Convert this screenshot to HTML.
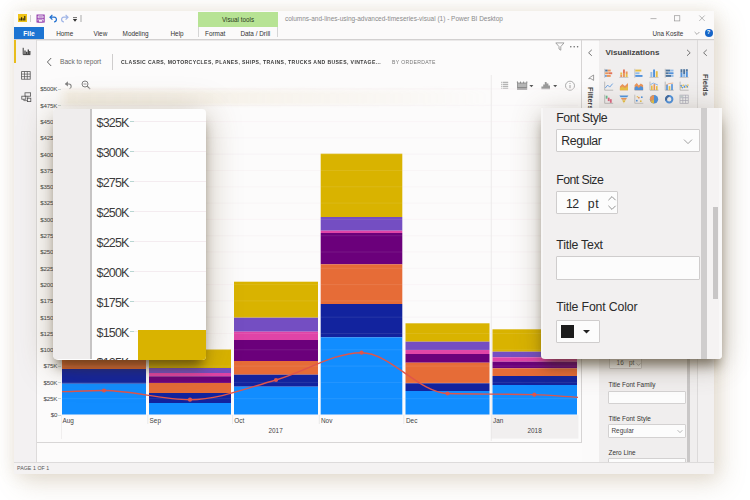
<!DOCTYPE html>
<html><head><meta charset="utf-8">
<style>
*{box-sizing:border-box;margin:0;padding:0}
html,body{width:750px;height:500px;overflow:hidden;background:#fff;font-family:"Liberation Sans",sans-serif;}
.abs{position:absolute}
#win{position:absolute;left:14px;top:11px;width:700px;height:463px;background:#f3f1f1;box-shadow:7px 9px 24px rgba(150,125,80,.22),0 0 16px rgba(160,135,90,.16);}
#page{position:absolute;left:0;top:0;width:750px;height:500px;overflow:hidden}
.t{position:absolute;white-space:nowrap;line-height:1;}
.tab{font-size:6.4px;color:#333;top:31.1px}
.yl{position:absolute;left:27.2px;width:30px;text-align:right;font-size:6.2px;letter-spacing:-.2px;color:#444;line-height:8px;white-space:nowrap}
.zl{position:absolute;left:96.6px;font-size:12.5px;letter-spacing:-0.85px;color:#3c3c3c;line-height:14px;white-space:nowrap}
.lab{font-size:6.4px;color:#333}
.zlab{font-size:12.3px;color:#2a2a2a;letter-spacing:-0.45px}
.box{position:absolute;background:#fcfcfc;border:0.7px solid #d3d1d1;border-radius:1px}
</style></head><body><div id="page">

<div id="win"></div>

<!-- title bar -->
<div class="abs" style="left:14px;top:11px;width:700px;height:28px;background:#fbfafa"></div>
<!-- logo -->
<div class="abs" style="left:18.3px;top:13.8px;width:8.7px;height:8.3px;background:#f0c419"></div>
<svg class="abs" style="left:18.3px;top:14.2px" width="9" height="8" viewBox="0 0 9 8"><path d="M2 6.5V4.5M3.6 6.5V3.2M5.2 6.5V4.2M6.8 6.5V2" stroke="#2a2410" stroke-width="1.1" fill="none"/></svg>
<div class="abs" style="left:30.3px;top:14.8px;width:1.2px;height:7px;background:#cdcdcd"></div>
<!-- save -->
<svg class="abs" style="left:36px;top:14px" width="9" height="9" viewBox="0 0 9 9"><rect x="1.1" y="1.1" width="7" height="6.9" fill="#fff" stroke="#8a2da5" stroke-width="1.1"/><rect x="2.4" y="1.2" width="4.4" height="2.6" fill="#c9a3d6"/><path d="M1.2 4.4H8" stroke="#8a2da5" stroke-width=".8"/><rect x="2.6" y="5.8" width="4" height="2.2" fill="#fff" stroke="#8a2da5" stroke-width=".6"/></svg>
<!-- undo -->
<svg class="abs" style="left:48.5px;top:13.6px" width="9" height="9" viewBox="0 0 9 9"><path d="M3.4 0.8L1 3.2L3.4 5.6M1.2 3.2H5.2C8.2 3.2 8.2 8 5 8" fill="none" stroke="#1f6fd0" stroke-width="1.2"/></svg>
<!-- redo -->
<svg class="abs" style="left:59.8px;top:13.6px" width="9" height="9" viewBox="0 0 9 9"><path d="M5.6 0.8L8 3.2L5.6 5.6M7.8 3.2H3.8C0.8 3.2 0.8 8 4 8" fill="none" stroke="#9fb4e6" stroke-width="1.2"/></svg>
<svg class="abs" style="left:71.5px;top:16.6px" width="6" height="6" viewBox="0 0 6 6"><path d="M1 0.6H5" stroke="#333" stroke-width=".7"/><path d="M0.8 2L3 4.8L5.2 2Z" fill="#333"/></svg>
<div class="abs" style="left:80.4px;top:14.8px;width:1.2px;height:7px;background:#d2d2d2"></div>

<!-- File tab -->
<div class="abs" style="left:14px;top:27px;width:30px;height:12px;background:#1c74d2"></div>
<div class="t" style="left:14px;width:30px;text-align:center;top:30.9px;font-size:6.6px;color:#fff;font-weight:bold">File</div>
<div class="t tab" style="left:49.7px;width:30px;text-align:center">Home</div>
<div class="t tab" style="left:85.4px;width:30px;text-align:center">View</div>
<div class="t tab" style="left:122.6px;">Modeling</div>
<div class="t tab" style="left:170.5px;">Help</div>
<!-- visual tools -->
<div class="abs" style="left:197.8px;top:12.3px;width:80.4px;height:14.6px;background:#b7e394"></div>
<div class="t" style="left:197.8px;width:80.4px;text-align:center;top:17.3px;font-size:6.3px;color:#2c3a22">Visual tools</div>
<div class="abs" style="left:197.8px;top:26.9px;width:80.4px;height:10px;border-left:0.7px solid #d5d5d5;border-right:0.7px solid #d5d5d5;"></div>
<div class="t tab" style="left:205px;">Format</div>
<div class="t tab" style="left:240.4px;">Data / Drill</div>
<div class="t" style="left:285px;top:16px;font-size:6.48px;color:#8a8a8a">columns-and-lines-using-advanced-timeseries-visual (1) - Power BI Desktop</div>
<!-- window buttons -->
<svg class="abs" style="left:648px;top:13px" width="60" height="12" viewBox="0 0 60 12"><path d="M2.5 5.6H8.5" stroke="#999" stroke-width=".7"/><rect x="26.6" y="2.7" width="5.2" height="5.2" fill="none" stroke="#999" stroke-width=".7"/><path d="M51.3 2.5L56.7 7.9M56.7 2.5L51.3 7.9" stroke="#999" stroke-width=".7"/></svg>
<div class="t" style="left:652.5px;top:30.6px;font-size:6.3px;color:#333">Una Kosite</div>
<svg class="abs" style="left:693.5px;top:30.5px" width="6" height="5" viewBox="0 0 6 5"><path d="M0.6 1L3 3.4L5.4 1" fill="none" stroke="#888" stroke-width=".7"/></svg>
<div class="abs" style="left:704.6px;top:28.8px;width:8px;height:8px;border-radius:50%;background:#1565c8"></div>
<div class="t" style="left:704.6px;width:8px;text-align:center;top:30.2px;font-size:5.8px;color:#fff;font-weight:bold">?</div>
<!-- ribbon bottom line -->
<div class="abs" style="left:14px;top:38.8px;width:700px;height:1px;background:#d2d0d0"></div>
<div class="abs" style="left:14px;top:39.6px;width:700px;height:1.2px;background:linear-gradient(#e3e1e1,#f3f1f1)"></div>

<!-- left sidebar -->
<div class="abs" style="left:14px;top:39.8px;width:22.6px;height:422px;background:#f3f1f2;border-right:1px solid #dddbdb"></div>
<div class="abs" style="left:14px;top:39.8px;width:2.2px;height:23px;background:#e8bd1c"></div>
<svg class="abs" style="left:21.6px;top:47.4px" width="9" height="9" viewBox="0 0 9 9"><path d="M1.2 0.8V7.6H8.4" fill="none" stroke="#3a3a3a" stroke-width="1"/><path d="M3 7V3.6M4.7 7V4.8M6.3 7V2.6M7.8 7V4" stroke="#3a3a3a" stroke-width="1.25"/></svg>
<svg class="abs" style="left:20.8px;top:70.8px" width="10" height="9" viewBox="0 0 10 9" preserveAspectRatio="none"><rect x=".6" y=".6" width="8.6" height="7.6" fill="none" stroke="#555" stroke-width=".8"/><path d="M.6 3.1H9.2M.6 5.6H9.2M3.5 .6V8.2M6.3 .6V8.2" stroke="#555" stroke-width=".7"/></svg>
<svg class="abs" style="left:20.6px;top:92px" width="11" height="11" viewBox="0 0 11 11"><rect x="4" y=".8" width="5.6" height="3.4" fill="none" stroke="#555" stroke-width=".8"/><rect x=".8" y="4.2" width="4" height="3" fill="none" stroke="#555" stroke-width=".8"/><rect x="6.4" y="6.2" width="3.4" height="3.4" fill="none" stroke="#555" stroke-width=".8"/><path d="M2.8 7.2V8.6H6.4M6.8 4.2V6.2" fill="none" stroke="#555" stroke-width=".7"/></svg>

<!-- canvas -->
<div class="abs" style="left:36.6px;top:40.8px;width:545.4px;height:421px;background:#fcfbfb"></div>
<div class="abs" style="left:36.6px;top:441.6px;width:545.4px;height:0.9px;background:#d8d6d6"></div>
<div class="abs" style="left:581px;top:40px;width:1px;height:402.4px;background:#d6d4d4"></div>
<!-- header -->
<svg class="abs" style="left:45.6px;top:57.2px" width="7" height="10" viewBox="0 0 7 10"><path d="M5.2 1L1.4 5L5.2 9" fill="none" stroke="#555" stroke-width=".9"/></svg>
<div class="t" style="left:60px;top:59.2px;font-size:6.62px;color:#666">Back to report</div>
<div class="abs" style="left:112px;top:53.5px;width:0.8px;height:16px;background:#cfcdcd"></div>
<div class="t" style="left:121px;top:59.6px;font-size:5.1px;font-weight:bold;color:#3a3a3a;letter-spacing:.405px;transform:scaleY(1.22);transform-origin:50% 50%">CLASSIC CARS, MOTORCYCLES, PLANES, SHIPS, TRAINS, TRUCKS AND BUSES, VINTAGE...</div>
<div class="t" style="left:392px;top:59.6px;font-size:5.1px;color:#777;letter-spacing:.34px;transform:scaleY(1.22);transform-origin:50% 50%">BY ORDERDATE</div>
<svg class="abs" style="left:554.6px;top:42.2px" width="10" height="9" viewBox="0 0 10 9"><path d="M0.8 0.9H9L5.8 4.6V8.2L4 7V4.6Z" fill="none" stroke="#8f8f8f" stroke-width=".8"/></svg>
<svg class="abs" style="left:568px;top:44px" width="12" height="5" viewBox="0 0 12 5"><circle cx="2.8" cy="2.7" r=".8" fill="#6a6a6a"/><circle cx="6.2" cy="2.7" r=".8" fill="#6a6a6a"/><circle cx="9.6" cy="2.7" r=".8" fill="#6a6a6a"/></svg>
<!-- visual toolbar -->
<svg class="abs" style="left:64.4px;top:79.8px" width="9" height="10" viewBox="0 0 9 10"><path d="M1.6 4H5C7.8 4 7.8 8.4 5.4 8.8" fill="none" stroke="#808080" stroke-width="1.05"/><path d="M3.9 1.2L0.8 4L3.9 6.6Z" fill="#808080"/></svg>
<svg class="abs" style="left:81px;top:79.8px" width="10" height="10" viewBox="0 0 10 10"><circle cx="4" cy="4" r="3" fill="none" stroke="#808080" stroke-width="1"/><path d="M6.2 6.2L9.2 9.2" stroke="#808080" stroke-width="1.2"/><path d="M2.5 4H5.5" stroke="#808080" stroke-width=".8"/></svg>
<svg class="abs" style="left:500px;top:79.5px" width="80" height="11" viewBox="0 0 80 11"><g stroke="#8a8a8a" stroke-width=".8" fill="none"><path d="M2.6 2.3H8.2M2.6 4.3H8.2M2.6 6.3H8.2M2.6 8.3H8.2"/><path d="M1 2.3H1.8M1 4.3H1.8M1 6.3H1.8M1 8.3H1.8"/><rect x="17.4" y="3" width="9.4" height="6.4" fill="#b5b5b5"/><rect x="17.4" y="7" width="9.4" height="2.4" fill="#8a8a8a" stroke="none"/><path d="M17.4 1.4V3M20.5 1.6V3.4M23.6 1.6V3.4M26.8 1.4V3" stroke-width="1"/><path d="M41.4 9.2V6.4H43.2V4.6H44.8V2H46.6V3.6H48.4V5.4H50V9.2Z" fill="#9a9a9a" stroke="none"/><circle cx="70" cy="5.7" r="4.5" stroke="#999"/><path d="M70 5V8.2M70 3V3.9" stroke-width=".8"/></g><path d="M29.4 5H33.4L31.4 7.2Z" fill="#555"/><path d="M53.2 5H57.2L55.2 7.2Z" fill="#555"/></svg>

<!-- chart -->
<svg class="abs" style="left:0;top:0" width="750" height="500" viewBox="0 0 750 500">
<rect x="491" y="415" width="87.4" height="23.6" fill="#f1efef"/>
<line x1="60" x2="578" y1="415.0" y2="415.0" stroke="#f7f0f3" stroke-width="0.6"/><line x1="60" x2="578" y1="398.7" y2="398.7" stroke="#f7f0f3" stroke-width="0.6"/><line x1="60" x2="578" y1="382.4" y2="382.4" stroke="#f7f0f3" stroke-width="0.6"/><line x1="60" x2="578" y1="366.1" y2="366.1" stroke="#f7f0f3" stroke-width="0.6"/><line x1="60" x2="578" y1="349.8" y2="349.8" stroke="#f7f0f3" stroke-width="0.6"/><line x1="60" x2="578" y1="333.5" y2="333.5" stroke="#f7f0f3" stroke-width="0.6"/><line x1="60" x2="578" y1="317.2" y2="317.2" stroke="#f7f0f3" stroke-width="0.6"/><line x1="60" x2="578" y1="300.9" y2="300.9" stroke="#f7f0f3" stroke-width="0.6"/><line x1="60" x2="578" y1="284.6" y2="284.6" stroke="#f7f0f3" stroke-width="0.6"/><line x1="60" x2="578" y1="268.3" y2="268.3" stroke="#f7f0f3" stroke-width="0.6"/><line x1="60" x2="578" y1="252.0" y2="252.0" stroke="#f7f0f3" stroke-width="0.6"/><line x1="60" x2="578" y1="235.7" y2="235.7" stroke="#f7f0f3" stroke-width="0.6"/><line x1="60" x2="578" y1="219.4" y2="219.4" stroke="#f7f0f3" stroke-width="0.6"/><line x1="60" x2="578" y1="203.1" y2="203.1" stroke="#f7f0f3" stroke-width="0.6"/><line x1="60" x2="578" y1="186.8" y2="186.8" stroke="#f7f0f3" stroke-width="0.6"/><line x1="60" x2="578" y1="170.5" y2="170.5" stroke="#f7f0f3" stroke-width="0.6"/><line x1="60" x2="578" y1="154.2" y2="154.2" stroke="#f7f0f3" stroke-width="0.6"/><line x1="60" x2="578" y1="137.9" y2="137.9" stroke="#f7f0f3" stroke-width="0.6"/><line x1="60" x2="578" y1="121.6" y2="121.6" stroke="#f7f0f3" stroke-width="0.6"/><line x1="60" x2="578" y1="105.3" y2="105.3" stroke="#f7f0f3" stroke-width="0.6"/><line x1="60" x2="578" y1="89.0" y2="89.0" stroke="#f7f0f3" stroke-width="0.6"/>
<line x1="491.3" x2="491.3" y1="75" y2="441" stroke="#e6e4e4" stroke-width=".7"/>
<line x1="61.5" x2="61.5" y1="415" y2="439" stroke="#e8e6e6" stroke-width=".6"/>
<line x1="147.8" x2="147.8" y1="415" y2="424" stroke="#dddddd" stroke-width=".6"/>
<line x1="232.6" x2="232.6" y1="415" y2="424" stroke="#dddddd" stroke-width=".6"/>
<line x1="319.3" x2="319.3" y1="415" y2="424" stroke="#dddddd" stroke-width=".6"/>
<line x1="403.8" x2="403.8" y1="415" y2="424" stroke="#dddddd" stroke-width=".6"/>
<rect x="62" y="345" width="84.0" height="7.0" fill="#D9B300"/>
<rect x="62" y="352" width="84.0" height="2.0" fill="#744EC2"/>
<rect x="62" y="354" width="84.0" height="1.0" fill="#E044A7"/>
<rect x="62" y="355" width="84.0" height="3.0" fill="#6B007B"/>
<rect x="62" y="358" width="84.0" height="11.0" fill="#E66C37"/>
<rect x="62" y="369" width="84.0" height="14.7" fill="#12239E"/>
<rect x="62" y="383.7" width="84.0" height="30.8" fill="#118DFF"/>
<rect x="149" y="349.5" width="82.0" height="18.5" fill="#D9B300"/>
<rect x="149" y="368" width="82.0" height="5.0" fill="#744EC2"/>
<rect x="149" y="373" width="82.0" height="3.3" fill="#E044A7"/>
<rect x="149" y="376.3" width="82.0" height="6.7" fill="#6B007B"/>
<rect x="149" y="383" width="82.0" height="10.0" fill="#E66C37"/>
<rect x="149" y="393" width="82.0" height="10.0" fill="#12239E"/>
<rect x="149" y="403" width="82.0" height="11.5" fill="#118DFF"/>
<rect x="234" y="281.7" width="84.0" height="36.0" fill="#D9B300"/>
<rect x="234" y="317.7" width="84.0" height="14.0" fill="#744EC2"/>
<rect x="234" y="331.7" width="84.0" height="8.3" fill="#E044A7"/>
<rect x="234" y="340" width="84.0" height="21.0" fill="#6B007B"/>
<rect x="234" y="361" width="84.0" height="13.7" fill="#E66C37"/>
<rect x="234" y="374.7" width="84.0" height="12.0" fill="#12239E"/>
<rect x="234" y="386.7" width="84.0" height="27.8" fill="#118DFF"/>
<rect x="320.7" y="153.7" width="81.6" height="63.3" fill="#D9B300"/>
<rect x="320.7" y="217" width="81.6" height="13.7" fill="#744EC2"/>
<rect x="320.7" y="230.7" width="81.6" height="2.3" fill="#E044A7"/>
<rect x="320.7" y="233" width="81.6" height="31.3" fill="#6B007B"/>
<rect x="320.7" y="264.3" width="81.6" height="39.7" fill="#E66C37"/>
<rect x="320.7" y="304" width="81.6" height="33.3" fill="#12239E"/>
<rect x="320.7" y="337.3" width="81.6" height="77.2" fill="#118DFF"/>
<rect x="405.5" y="323.3" width="84.0" height="18.4" fill="#D9B300"/>
<rect x="405.5" y="341.7" width="84.0" height="8.3" fill="#744EC2"/>
<rect x="405.5" y="350" width="84.0" height="4.0" fill="#E044A7"/>
<rect x="405.5" y="354" width="84.0" height="8.7" fill="#6B007B"/>
<rect x="405.5" y="362.7" width="84.0" height="20.6" fill="#E66C37"/>
<rect x="405.5" y="383.3" width="84.0" height="7.7" fill="#12239E"/>
<rect x="405.5" y="391" width="84.0" height="23.5" fill="#118DFF"/>
<rect x="492.5" y="329.3" width="84.5" height="22.4" fill="#D9B300"/>
<rect x="492.5" y="351.7" width="84.5" height="5.6" fill="#744EC2"/>
<rect x="492.5" y="357.3" width="84.5" height="4.4" fill="#E044A7"/>
<rect x="492.5" y="361.7" width="84.5" height="6.6" fill="#6B007B"/>
<rect x="492.5" y="368.3" width="84.5" height="7.7" fill="#E66C37"/>
<rect x="492.5" y="376" width="84.5" height="9.0" fill="#12239E"/>
<rect x="492.5" y="385" width="84.5" height="29.5" fill="#118DFF"/>
<line x1="62" x2="577" y1="398.7" y2="398.7" stroke="#ffffff" stroke-opacity=".13" stroke-width="0.7"/><line x1="62" x2="577" y1="382.4" y2="382.4" stroke="#ffffff" stroke-opacity=".13" stroke-width="0.7"/><line x1="62" x2="577" y1="366.1" y2="366.1" stroke="#ffffff" stroke-opacity=".13" stroke-width="0.7"/><line x1="62" x2="577" y1="349.8" y2="349.8" stroke="#ffffff" stroke-opacity=".13" stroke-width="0.7"/><line x1="62" x2="577" y1="333.5" y2="333.5" stroke="#ffffff" stroke-opacity=".13" stroke-width="0.7"/><line x1="62" x2="577" y1="317.2" y2="317.2" stroke="#ffffff" stroke-opacity=".13" stroke-width="0.7"/><line x1="62" x2="577" y1="300.9" y2="300.9" stroke="#ffffff" stroke-opacity=".13" stroke-width="0.7"/><line x1="62" x2="577" y1="284.6" y2="284.6" stroke="#ffffff" stroke-opacity=".13" stroke-width="0.7"/><line x1="62" x2="577" y1="268.3" y2="268.3" stroke="#ffffff" stroke-opacity=".13" stroke-width="0.7"/><line x1="62" x2="577" y1="252.0" y2="252.0" stroke="#ffffff" stroke-opacity=".13" stroke-width="0.7"/><line x1="62" x2="577" y1="235.7" y2="235.7" stroke="#ffffff" stroke-opacity=".13" stroke-width="0.7"/><line x1="62" x2="577" y1="219.4" y2="219.4" stroke="#ffffff" stroke-opacity=".13" stroke-width="0.7"/><line x1="62" x2="577" y1="203.1" y2="203.1" stroke="#ffffff" stroke-opacity=".13" stroke-width="0.7"/><line x1="62" x2="577" y1="186.8" y2="186.8" stroke="#ffffff" stroke-opacity=".13" stroke-width="0.7"/><line x1="62" x2="577" y1="170.5" y2="170.5" stroke="#ffffff" stroke-opacity=".13" stroke-width="0.7"/><line x1="62" x2="577" y1="154.2" y2="154.2" stroke="#ffffff" stroke-opacity=".13" stroke-width="0.7"/><line x1="62" x2="577" y1="137.9" y2="137.9" stroke="#ffffff" stroke-opacity=".13" stroke-width="0.7"/><line x1="62" x2="577" y1="121.6" y2="121.6" stroke="#ffffff" stroke-opacity=".13" stroke-width="0.7"/><line x1="62" x2="577" y1="105.3" y2="105.3" stroke="#ffffff" stroke-opacity=".13" stroke-width="0.7"/><line x1="62" x2="577" y1="89.0" y2="89.0" stroke="#ffffff" stroke-opacity=".13" stroke-width="0.7"/>
<path d="M62,391.7 C76.0,391.30 90.0,390.50 104,390.5 C132.7,390.50 161.3,399.70 190,399.7 C218.7,399.70 247.3,387.86 276,380 C304.5,372.18 333.0,352.70 361.5,352.7 C390.2,352.70 418.8,392.71 447.5,393.5 C476.4,394.30 505.4,393.90 534.3,394.7 C548.9,395.10 563.4,396.43 578,397.3" fill="none" stroke="#df554b" stroke-width="1.35"/>
<circle cx="104" cy="390.5" r="2.1" fill="#df554b"/><circle cx="190" cy="399.7" r="2.1" fill="#df554b"/><circle cx="276" cy="380" r="2.1" fill="#df554b"/><circle cx="361.5" cy="352.7" r="2.1" fill="#df554b"/><circle cx="447.5" cy="393.5" r="2.1" fill="#df554b"/><circle cx="534.3" cy="394.7" r="2.1" fill="#df554b"/>
</svg>
<div class="yl" style="top:411.3px">$0</div><div class="abs" style="left:58.4px;top:414.7px;width:2.4px;height:0.6px;background:#c9d6d4"></div><div class="yl" style="top:395.0px">$25K</div><div class="abs" style="left:58.4px;top:398.4px;width:2.4px;height:0.6px;background:#c9d6d4"></div><div class="yl" style="top:378.7px">$50K</div><div class="abs" style="left:58.4px;top:382.1px;width:2.4px;height:0.6px;background:#c9d6d4"></div><div class="yl" style="top:362.4px">$75K</div><div class="abs" style="left:58.4px;top:365.8px;width:2.4px;height:0.6px;background:#c9d6d4"></div><div class="yl" style="top:346.1px">$100K</div><div class="abs" style="left:58.4px;top:349.5px;width:2.4px;height:0.6px;background:#c9d6d4"></div><div class="yl" style="top:329.8px">$125K</div><div class="abs" style="left:58.4px;top:333.2px;width:2.4px;height:0.6px;background:#c9d6d4"></div><div class="yl" style="top:313.5px">$150K</div><div class="abs" style="left:58.4px;top:316.9px;width:2.4px;height:0.6px;background:#c9d6d4"></div><div class="yl" style="top:297.2px">$175K</div><div class="abs" style="left:58.4px;top:300.6px;width:2.4px;height:0.6px;background:#c9d6d4"></div><div class="yl" style="top:280.9px">$200K</div><div class="abs" style="left:58.4px;top:284.3px;width:2.4px;height:0.6px;background:#c9d6d4"></div><div class="yl" style="top:264.6px">$225K</div><div class="abs" style="left:58.4px;top:268.0px;width:2.4px;height:0.6px;background:#c9d6d4"></div><div class="yl" style="top:248.3px">$250K</div><div class="abs" style="left:58.4px;top:251.7px;width:2.4px;height:0.6px;background:#c9d6d4"></div><div class="yl" style="top:232.0px">$275K</div><div class="abs" style="left:58.4px;top:235.4px;width:2.4px;height:0.6px;background:#c9d6d4"></div><div class="yl" style="top:215.7px">$300K</div><div class="abs" style="left:58.4px;top:219.1px;width:2.4px;height:0.6px;background:#c9d6d4"></div><div class="yl" style="top:199.4px">$325K</div><div class="abs" style="left:58.4px;top:202.8px;width:2.4px;height:0.6px;background:#c9d6d4"></div><div class="yl" style="top:183.1px">$350K</div><div class="abs" style="left:58.4px;top:186.5px;width:2.4px;height:0.6px;background:#c9d6d4"></div><div class="yl" style="top:166.8px">$375K</div><div class="abs" style="left:58.4px;top:170.2px;width:2.4px;height:0.6px;background:#c9d6d4"></div><div class="yl" style="top:150.5px">$400K</div><div class="abs" style="left:58.4px;top:153.9px;width:2.4px;height:0.6px;background:#c9d6d4"></div><div class="yl" style="top:134.2px">$425K</div><div class="abs" style="left:58.4px;top:137.6px;width:2.4px;height:0.6px;background:#c9d6d4"></div><div class="yl" style="top:117.9px">$450K</div><div class="abs" style="left:58.4px;top:121.3px;width:2.4px;height:0.6px;background:#c9d6d4"></div><div class="yl" style="top:101.6px">$475K</div><div class="abs" style="left:58.4px;top:105.0px;width:2.4px;height:0.6px;background:#c9d6d4"></div><div class="yl" style="top:85.3px">$500K</div><div class="abs" style="left:58.4px;top:88.7px;width:2.4px;height:0.6px;background:#c9d6d4"></div>
<div class="t lab" style="left:62.5px;top:418px;color:#444">Aug</div>
<div class="t lab" style="left:149.6px;top:418px;color:#444">Sep</div>
<div class="t lab" style="left:234.3px;top:418px;color:#444">Oct</div>
<div class="t lab" style="left:321px;top:418px;color:#444">Nov</div>
<div class="t lab" style="left:406px;top:418px;color:#444">Dec</div>
<div class="t lab" style="left:493px;top:418px;color:#444">Jan</div>
<div class="t lab" style="left:268.5px;top:427.6px;color:#444">2017</div>
<div class="t lab" style="left:527.5px;top:427.6px;color:#444">2018</div>

<!-- right panes -->
<div class="abs" style="left:582px;top:40.8px;width:17px;height:421px;background:#fbfafa"></div>
<div class="abs" style="left:598.6px;top:40px;width:0.9px;height:422px;background:#e2e0e0"></div>
<div class="abs" style="left:599.4px;top:40.8px;width:97.6px;height:421px;background:#f0eeee"></div>
<div class="abs" style="left:697px;top:40px;width:0.8px;height:422px;background:#dcdada"></div>
<div class="abs" style="left:697.8px;top:40.8px;width:16.2px;height:421px;background:#f2f0f0"></div>
<svg class="abs" style="left:586.5px;top:48.2px" width="7" height="10" viewBox="0 0 7 10"><path d="M4.8 1.8L1.6 4.8L4.8 7.8" fill="none" stroke="#555" stroke-width=".8"/></svg>
<svg class="abs" style="left:702.2px;top:48.2px" width="7" height="10" viewBox="0 0 7 10"><path d="M4.8 1.8L1.6 4.8L4.8 7.8" fill="none" stroke="#555" stroke-width=".8"/></svg>
<svg class="abs" style="left:684.6px;top:48.2px" width="7" height="10" viewBox="0 0 7 10"><path d="M2 1.8L5.2 4.8L2 7.8" fill="none" stroke="#555" stroke-width=".8"/></svg>
<div class="t" style="left:605.6px;top:48.8px;font-size:8.1px;font-weight:bold;color:#444">Visualizations</div>
<svg class="abs" style="left:587px;top:73.5px" width="8" height="8" viewBox="0 0 8 8"><path d="M6.6 1V6.4L3.8 4.6H1.6L3.8 2.8Z" fill="none" stroke="#777" stroke-width=".7"/></svg>
<div class="t" style="left:583.4px;top:86.6px;font-size:7.6px;font-weight:bold;color:#444;transform-origin:0 0;transform:translate(11px,0) rotate(90deg)">Filters</div>
<div class="t" style="left:698.2px;top:74px;font-size:7.6px;font-weight:bold;color:#444;transform-origin:0 0;transform:translate(11px,0) rotate(90deg)">Fields</div>
<svg class="abs" style="left:0;top:0;opacity:.82" width="750" height="500" viewBox="0 0 750 500"><g transform="translate(604.2,68.8)"><path d="M.5 0V9" stroke="#999" stroke-width=".6"/><rect x="1" y="0.8" width="2.5" height="1.9" fill="#2a5a8c"/><rect x="3.5" y="0.8" width="3" height="1.9" fill="#e8833a"/><rect x="1" y="3.5" width="3.5" height="1.9" fill="#e8833a"/><rect x="4.5" y="3.5" width="3.5" height="1.9" fill="#e05a3a"/><rect x="1" y="6.2" width="1.5" height="1.9" fill="#2f7ed8"/><rect x="2.5" y="6.2" width="4" height="1.9" fill="#e8833a"/></g><g transform="translate(619.4,68.8)"><path d="M0 8.6H9" stroke="#999" stroke-width=".6"/><rect x="0.9" y="5.699999999999999" width="1.9" height="2.5" fill="#e8833a"/><rect x="0.9" y="3.6999999999999993" width="1.9" height="2" fill="#e6b422"/><rect x="3.6" y="4.199999999999999" width="1.9" height="4" fill="#e8833a"/><rect x="3.6" y="0.6999999999999993" width="1.9" height="3.5" fill="#e05a3a"/><rect x="6.300000000000001" y="5.199999999999999" width="1.9" height="3" fill="#e6b422"/><rect x="6.300000000000001" y="2.6999999999999993" width="1.9" height="2.5" fill="#e8833a"/></g><g transform="translate(634.3,68.8)"><path d="M.5 0V9" stroke="#999" stroke-width=".6"/><rect x="1" y="0.8" width="6" height="1.9" fill="#e6b422"/><rect x="1" y="3.5" width="4.2" height="1.9" fill="#7fb2e6"/><rect x="1" y="6.2" width="7.2" height="1.9" fill="#2f7ed8"/></g><g transform="translate(649.5,68.8)"><path d="M0 8.6H9" stroke="#999" stroke-width=".6"/><rect x="0.9" y="3.1999999999999993" width="1.9" height="5" fill="#7fb2e6"/><rect x="3.6" y="0.6999999999999993" width="1.9" height="7.5" fill="#2f7ed8"/><rect x="6.300000000000001" y="2.3999999999999995" width="1.9" height="5.8" fill="#e6b422"/></g><g transform="translate(664.7,68.8)"><path d="M.5 0V9" stroke="#999" stroke-width=".6"/><rect x="1" y="0.8" width="4.5" height="1.9" fill="#2a5a8c"/><rect x="5.5" y="0.8" width="3.3" height="1.9" fill="#7fb2e6"/><rect x="1" y="3.5" width="3" height="1.9" fill="#2a5a8c"/><rect x="4" y="3.5" width="4.8" height="1.9" fill="#2f7ed8"/><rect x="1" y="6.2" width="5.4" height="1.9" fill="#2a5a8c"/><rect x="6.4" y="6.2" width="2.4" height="1.9" fill="#7fb2e6"/></g><g transform="translate(679.6,68.8)"><path d="M0 8.6H9" stroke="#999" stroke-width=".6"/><rect x="0.9" y="3.6999999999999993" width="1.9" height="4.5" fill="#2f7ed8"/><rect x="0.9" y="0.39999999999999947" width="1.9" height="3.3" fill="#2a5a8c"/><rect x="3.6" y="5.199999999999999" width="1.9" height="3" fill="#7fb2e6"/><rect x="3.6" y="0.39999999999999947" width="1.9" height="4.8" fill="#2a5a8c"/><rect x="6.300000000000001" y="2.799999999999999" width="1.9" height="5.4" fill="#2f7ed8"/><rect x="6.300000000000001" y="0.399999999999999" width="1.9" height="2.4" fill="#2a5a8c"/></g><g transform="translate(604.2,81.6)"><path d="M.5 0V8.6H9" stroke="#888" stroke-width=".6" fill="none"/><path d="M1 6.5L3.5 3.5L5.5 5.5L8.5 2" stroke="#2f7ed8" stroke-width=".8" fill="none"/></g><g transform="translate(619.4,81.6)"><path d="M.5 8.6V5L3 2.5L5.5 4.5L8.6 1.5V8.6Z" fill="#e8833a"/><path d="M.5 8.6V6.5L3 5L5.5 6.5L8.6 4.5V8.6Z" fill="#e6b422"/></g><g transform="translate(634.3,81.6)"><path d="M.3 8.6V3.5L2.5 1.5L4.5 4L6.5 2L8.8 3.5V8.6Z" fill="#e8833a"/><path d="M.3 8.6V6L2.5 4.5L4.5 6.5L6.5 4.5L8.8 6V8.6Z" fill="#2f7ed8"/></g><g transform="translate(649.5,81.6)"><path d="M.5 0V8.6H9" stroke="#888" stroke-width=".6" fill="none"/><rect x="1.5" y="4" width="1.6" height="4.5" fill="#e6b422"/><rect x="4" y="2.5" width="1.6" height="6" fill="#e8833a"/><rect x="6.5" y="4.5" width="1.6" height="4" fill="#e6b422"/><path d="M1 3L4 1.5L8.5 3.5" stroke="#2f7ed8" stroke-width=".6" fill="none"/></g><g transform="translate(664.7,81.6)"><path d="M.5 0V8.6H9" stroke="#888" stroke-width=".6" fill="none"/><rect x="1.5" y="3" width="1.6" height="5.5" fill="#2f7ed8"/><rect x="4" y="4.5" width="1.6" height="4" fill="#e6b422"/><rect x="6.5" y="2.5" width="1.6" height="6" fill="#2f7ed8"/><path d="M1 4L4 2L8.5 1.5" stroke="#e8833a" stroke-width=".6" fill="none"/></g><g transform="translate(679.6,81.6)"><path d="M.5 0V8.6H9" stroke="#888" stroke-width=".6" fill="none"/><path d="M1.2 6.5Q3 1 4.8 4.5T8.6 3" stroke="#e6b422" stroke-width="1.3" fill="none" stroke-dasharray="1.4 .8"/><path d="M1.2 3.5Q3 8 4.8 5T8.6 6.5" stroke="#2f7ed8" stroke-width="1.3" fill="none" stroke-dasharray="1.4 .8"/></g><g transform="translate(604.2,94.7)"><path d="M.5 0V8.6H9" stroke="#888" stroke-width=".6" fill="none"/><rect x="1.5" y="1" width="1.8" height="3" fill="#4caf7a"/><rect x="3.6" y="3" width="1.8" height="3.4" fill="#d64a6a"/><rect x="5.7" y="4.5" width="1.8" height="3.6" fill="#d64a6a"/></g><g transform="translate(619.4,94.7)"><path d="M0 .8H9L7.8 2.6H1.2Z" fill="#2f7ed8"/><path d="M1.5 3.2H7.5L6.5 5H2.5Z" fill="#e8833a"/><path d="M2.8 5.6H6.2L5.4 7.2H3.6Z" fill="#e6b422"/><path d="M3.9 7.6H5.1L4.5 8.8Z" fill="#e6b422"/></g><g transform="translate(634.3,94.7)"><path d="M.5 0V8.6H9" stroke="#999" stroke-width=".6" fill="none"/><circle cx="2.5" cy="6" r=".9" fill="#2f7ed8"/><circle cx="4.5" cy="3" r=".9" fill="#e8833a"/><circle cx="6.5" cy="6.5" r=".9" fill="#e6b422"/><circle cx="7.5" cy="2.5" r=".9" fill="#2f7ed8"/><circle cx="3" cy="2" r=".7" fill="#e6b422"/></g><g transform="translate(649.5,94.7)"><circle cx="4.5" cy="4.5" r="4.2" fill="#2f7ed8"/><path d="M4.5 4.5V.3A4.2 4.2 0 0 0 1 6.8Z" fill="#e8833a"/><path d="M4.5 4.5L1 6.8A4.2 4.2 0 0 0 4.5 8.7Z" fill="#e6b422"/></g><g transform="translate(664.7,94.7)"><circle cx="4.5" cy="4.5" r="3.2" fill="none" stroke="#2f7ed8" stroke-width="2"/><path d="M4.5 1.3A3.2 3.2 0 0 0 1.5 5.6" fill="none" stroke="#1f4e8c" stroke-width="2"/></g><g transform="translate(679.6,94.7)"><rect x=".4" y=".4" width="8.2" height="8.2" fill="#eef0f0" stroke="#99a" stroke-width=".7"/><path d="M.4 3H8.6M.4 5.8H8.6M3.2 .4V8.6M6 .4V8.6" stroke="#99a" stroke-width=".7"/><rect x=".4" y=".4" width="2.8" height="2.6" fill="#b9c4c8"/></g></svg>

<!-- format pane below overlay -->
<div class="abs" style="left:686.6px;top:108px;width:3.6px;height:354px;background:#c9c7c7"></div>
<div class="box" style="left:608.5px;top:353px;width:33.5px;height:15.5px"></div>
<div class="t lab" style="left:616.6px;top:359.8px;color:#555">16&nbsp;&nbsp;&nbsp;pt</div>
<svg class="abs" style="left:636px;top:361px" width="5" height="6" viewBox="0 0 5 6"><path d="M.6 2.4L2.5 4.4L4.4 2.4" fill="none" stroke="#888" stroke-width=".6"/></svg>
<div class="t lab" style="left:608.5px;top:382px">Title Font Family</div>
<div class="box" style="left:608.2px;top:391.2px;width:78.2px;height:12.8px"></div>
<div class="t lab" style="left:608.5px;top:416px">Title Font Style</div>
<div class="box" style="left:608.2px;top:424.4px;width:78.2px;height:13.2px"></div>
<div class="t lab" style="left:611.5px;top:428.4px;color:#444">Regular</div>
<svg class="abs" style="left:677px;top:428.6px" width="6" height="5" viewBox="0 0 6 5"><path d="M.6 1.2L3 3.6L5.4 1.2" fill="none" stroke="#888" stroke-width=".6"/></svg>
<div class="t lab" style="left:608.5px;top:449.5px">Zero Line</div>
<div class="box" style="left:608.2px;top:458px;width:78.2px;height:8px"></div>

<!-- status bar -->
<div class="abs" style="left:14px;top:461.8px;width:700px;height:12.2px;background:#f4f2f2;border-top:0.8px solid #dddbdb"></div>
<div class="t" style="left:17px;top:465.8px;font-size:5.25px;color:#555;letter-spacing:.05px">PAGE 1 OF 1</div>

<div class="abs" style="left:56px;top:86px;width:440px;height:22px;background:linear-gradient(rgba(215,190,130,0),rgba(215,190,130,.17) 35%,rgba(215,190,130,.17) 75%,rgba(215,190,130,0));-webkit-mask-image:linear-gradient(to right,transparent,#000 3%,rgba(0,0,0,.75) 40%,rgba(0,0,0,.3) 80%,transparent)"></div>
<!-- overlay 1 -->
<div class="abs" style="left:53px;top:109.3px;width:153px;height:250.4px;border-radius:3px 4px 4px 5px;background:#fdfdfd;box-shadow:0 5px 34px rgba(100,78,35,.36),0 10px 12px -4px rgba(45,32,10,.62);overflow:hidden">
 <div class="abs" style="left:0;top:0;width:38px;height:250px;background:#efeded"></div>
 <div class="abs" style="left:36.9px;top:0;width:2.2px;height:250px;background:#c6c4c4"></div>
 <div class="abs" style="left:77px;top:12.1px;width:4px;height:0.8px;background:#b9d6d2"></div><div class="abs" style="left:81px;top:12.1px;width:72px;height:0.7px;background:#f4ecf0"></div><div class="abs" style="left:77px;top:42.1px;width:4px;height:0.8px;background:#b9d6d2"></div><div class="abs" style="left:81px;top:42.1px;width:72px;height:0.7px;background:#f4ecf0"></div><div class="abs" style="left:77px;top:72.1px;width:4px;height:0.8px;background:#b9d6d2"></div><div class="abs" style="left:81px;top:72.1px;width:72px;height:0.7px;background:#f4ecf0"></div><div class="abs" style="left:77px;top:102.1px;width:4px;height:0.8px;background:#b9d6d2"></div><div class="abs" style="left:81px;top:102.1px;width:72px;height:0.7px;background:#f4ecf0"></div><div class="abs" style="left:77px;top:132.1px;width:4px;height:0.8px;background:#b9d6d2"></div><div class="abs" style="left:81px;top:132.1px;width:72px;height:0.7px;background:#f4ecf0"></div><div class="abs" style="left:77px;top:162.1px;width:4px;height:0.8px;background:#b9d6d2"></div><div class="abs" style="left:81px;top:162.1px;width:72px;height:0.7px;background:#f4ecf0"></div><div class="abs" style="left:77px;top:192.1px;width:4px;height:0.8px;background:#b9d6d2"></div><div class="abs" style="left:81px;top:192.1px;width:72px;height:0.7px;background:#f4ecf0"></div><div class="abs" style="left:77px;top:222.1px;width:4px;height:0.8px;background:#b9d6d2"></div><div class="abs" style="left:81px;top:222.1px;width:72px;height:0.7px;background:#f4ecf0"></div><div class="abs" style="left:77px;top:252.1px;width:4px;height:0.8px;background:#b9d6d2"></div><div class="abs" style="left:81px;top:252.1px;width:72px;height:0.7px;background:#f4ecf0"></div>
 <div class="abs" style="left:85px;top:220.7px;width:69px;height:30px;background:#D9B300"></div>
</div>
<div class="zl" style="top:116.0px;">$325K</div><div class="zl" style="top:146.0px;">$300K</div><div class="zl" style="top:176.0px;">$275K</div><div class="zl" style="top:206.0px;">$250K</div><div class="zl" style="top:236.0px;">$225K</div><div class="zl" style="top:266.0px;">$200K</div><div class="zl" style="top:296.0px;">$175K</div><div class="zl" style="top:326.0px;">$150K</div><div class="zl" style="top:356.0px;clip-path:inset(0 0 10.0px 0);">$125K</div>

<!-- overlay 2 -->
<div class="abs" style="left:541.2px;top:107.6px;width:181.2px;height:251.7px;border-radius:0 0 4px 4px;background:#f2f0f0;box-shadow:0 5px 30px rgba(95,80,50,.30),0 10px 12px -4px rgba(45,32,10,.58);overflow:hidden">
 <div class="abs" style="left:160.1px;top:0;width:5.5px;height:252px;background:#cfcdcd"></div>
 <div class="abs" style="left:165.6px;top:0;width:17px;height:252px;background:#f5f3f3"></div>
 <div class="abs" style="left:178.2px;top:0;width:3px;height:252px;background:rgba(255,255,255,.45)"></div>
 <div class="abs" style="left:0;top:0;width:1.6px;height:252px;background:rgba(255,255,255,.4)"></div>
 <div class="abs" style="left:172px;top:99px;width:5px;height:92px;background:#c8c6c6"></div>
</div>
<div class="t zlab" style="left:556.3px;top:111.6px">Font Style</div>
<div class="box" style="left:556.2px;top:129.1px;width:144.2px;height:23.3px;border-color:#cfcdcd"></div>
<div class="t zlab" style="left:561.3px;top:135.2px;letter-spacing:-.42px">Regular</div>
<svg class="abs" style="left:683px;top:137.5px" width="10" height="8" viewBox="0 0 10 8"><path d="M1 1.6L5 5.6L9 1.6" fill="none" stroke="#888" stroke-width=".8"/></svg>
<div class="t zlab" style="left:556.3px;top:173.8px;letter-spacing:-.56px">Font Size</div>
<div class="box" style="left:556.2px;top:191.3px;width:62px;height:23px;border-color:#cfcdcd"></div>
<div class="t zlab" style="left:566px;top:197.5px;letter-spacing:-.7px">12</div>
<div class="t zlab" style="left:587.7px;top:197.5px;letter-spacing:.6px">pt</div>
<svg class="abs" style="left:607px;top:194px" width="10" height="18" viewBox="0 0 10 18"><path d="M1.4 6.2L5 2.6L8.6 6.2M1.4 11.8L5 15.4L8.6 11.8" fill="none" stroke="#777" stroke-width=".8"/></svg>
<div class="t zlab" style="left:556.3px;top:239.2px;letter-spacing:-.2px">Title Text</div>
<div class="box" style="left:556.2px;top:256.4px;width:144.2px;height:23.2px;border-color:#cfcdcd"></div>
<div class="t zlab" style="left:556.3px;top:300.9px;letter-spacing:-.16px">Title Font Color</div>
<div class="box" style="left:556.2px;top:320.2px;width:43.5px;height:23.2px;border-color:#cfcdcd"></div>
<div class="abs" style="left:561px;top:325.2px;width:12.9px;height:12.5px;background:#1c1c1c"></div>
<svg class="abs" style="left:581.5px;top:329px" width="9" height="6" viewBox="0 0 9 6"><path d="M1 1H8L4.5 4.6Z" fill="#222"/></svg>

</div></body></html>
